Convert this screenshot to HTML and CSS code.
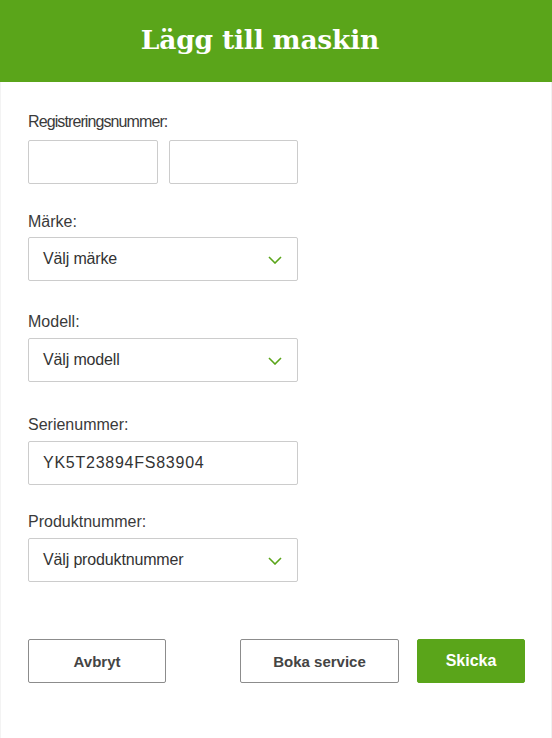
FILE: index.html
```html
<!DOCTYPE html>
<html lang="sv">
<head>
<meta charset="utf-8">
<title>Lägg till maskin</title>
<link rel="stylesheet" href="styles.css">
</head>
<body>
<div class="modal">
  <header class="modal-header">
    <h1 class="modal-title">Lägg till maskin</h1>
  </header>
  <form class="modal-body">
    <div class="field field-reg">
      <label class="label label-condensed">Registreringsnummer:</label>
      <div class="reg-row">
        <div class="input input-small"></div>
        <div class="input input-small"></div>
      </div>
    </div>
    <div class="field field-brand">
      <label class="label">Märke:</label>
      <div class="input select"><span>Välj märke</span>
        <svg class="chevron" width="14" height="8" viewBox="0 0 14 8"><path d="M1 1 L7 7 L13 1" fill="none" stroke="#5aa51a" stroke-width="1.6"/></svg>
      </div>
    </div>
    <div class="field field-model">
      <label class="label">Modell:</label>
      <div class="input select"><span>Välj modell</span>
        <svg class="chevron" width="14" height="8" viewBox="0 0 14 8"><path d="M1 1 L7 7 L13 1" fill="none" stroke="#5aa51a" stroke-width="1.6"/></svg>
      </div>
    </div>
    <div class="field field-serial">
      <label class="label">Serienummer:</label>
      <div class="input text-value"><span>YK5T23894FS83904</span></div>
    </div>
    <div class="field field-product">
      <label class="label">Produktnummer:</label>
      <div class="input select"><span>Välj produktnummer</span>
        <svg class="chevron" width="14" height="8" viewBox="0 0 14 8"><path d="M1 1 L7 7 L13 1" fill="none" stroke="#5aa51a" stroke-width="1.6"/></svg>
      </div>
    </div>
    <div class="actions">
      <button type="button" class="btn btn-cancel">Avbryt</button>
      <div class="actions-right">
        <button type="button" class="btn btn-service">Boka service</button>
        <button type="button" class="btn btn-primary">Skicka</button>
      </div>
    </div>
  </form>
</div>
</body>
</html>
```
FILE: styles.css
```css
* { box-sizing: border-box; }
html, body { margin: 0; padding: 0; background: #fff; }
body { font-family: "Liberation Sans", Arial, sans-serif; color: #333; }

.modal { width: 552px; height: 738px; display: flex; flex-direction: column; }

.modal-header {
  height: 82px;
  background: #5aa51a;
  display: flex;
  align-items: center;
  justify-content: center;
  padding-right: 32px;
}
.modal-title {
  margin: 0;
  color: #fff;
  font-family: "DejaVu Serif", Georgia, serif;
  font-weight: bold;
  font-size: 26.5px;
  letter-spacing: -0.2px;
  line-height: 1;
  padding-bottom: 1px;
}

.modal-body {
  flex: 1;
  padding: 30px 27px 0 28px;
  box-shadow: inset 1px 0 0 #f3f3f3, inset -1px 0 0 #f1f1f1;
}

.field { width: 270px; }
.field-brand { margin-top: 28px; }
.field-model { margin-top: 31px; }
.field-serial { margin-top: 33px; }
.field-product { margin-top: 27px; }

.label {
  display: block;
  font-size: 16px;
  line-height: 20px;
  color: #3a3a3a;
  margin-bottom: 6px;
}
.label-condensed { letter-spacing: -0.9px; margin-bottom: 8px; }
.field-brand .label { margin-bottom: 5px; }

.reg-row { display: flex; gap: 11px; }

.input {
  height: 44px;
  border: 1px solid #cccccc;
  border-radius: 2px;
  background: #fff;
  display: flex;
  align-items: center;
  padding: 0 15px 0 14px;
  font-size: 16px;
  color: #333;
}
.input-small { width: 130px; }
.reg-row .input-small:last-child { width: 129px; }
.select { justify-content: space-between; }
.select span { letter-spacing: -0.15px; }
.chevron { display: block; margin-top: 1px; }
.text-value span { letter-spacing: 0.75px; }

.actions {
  margin-top: 57px;
  display: flex;
  justify-content: space-between;
}
.actions-right { display: flex; gap: 18px; }

.btn {
  height: 44px;
  border: 1px solid #8c8c8c;
  border-radius: 2px;
  background: #fff;
  color: #444;
  font-family: "Liberation Sans", Arial, sans-serif;
  font-weight: bold;
  font-size: 15px;
  padding: 0;
  cursor: pointer;
}
.btn-cancel { width: 138px; }
.btn-service { width: 159px; }
.btn-primary {
  width: 108px;
  background: #5aa51a;
  border-color: #5aa51a;
  color: #fff;
  font-size: 16px;
}
```
